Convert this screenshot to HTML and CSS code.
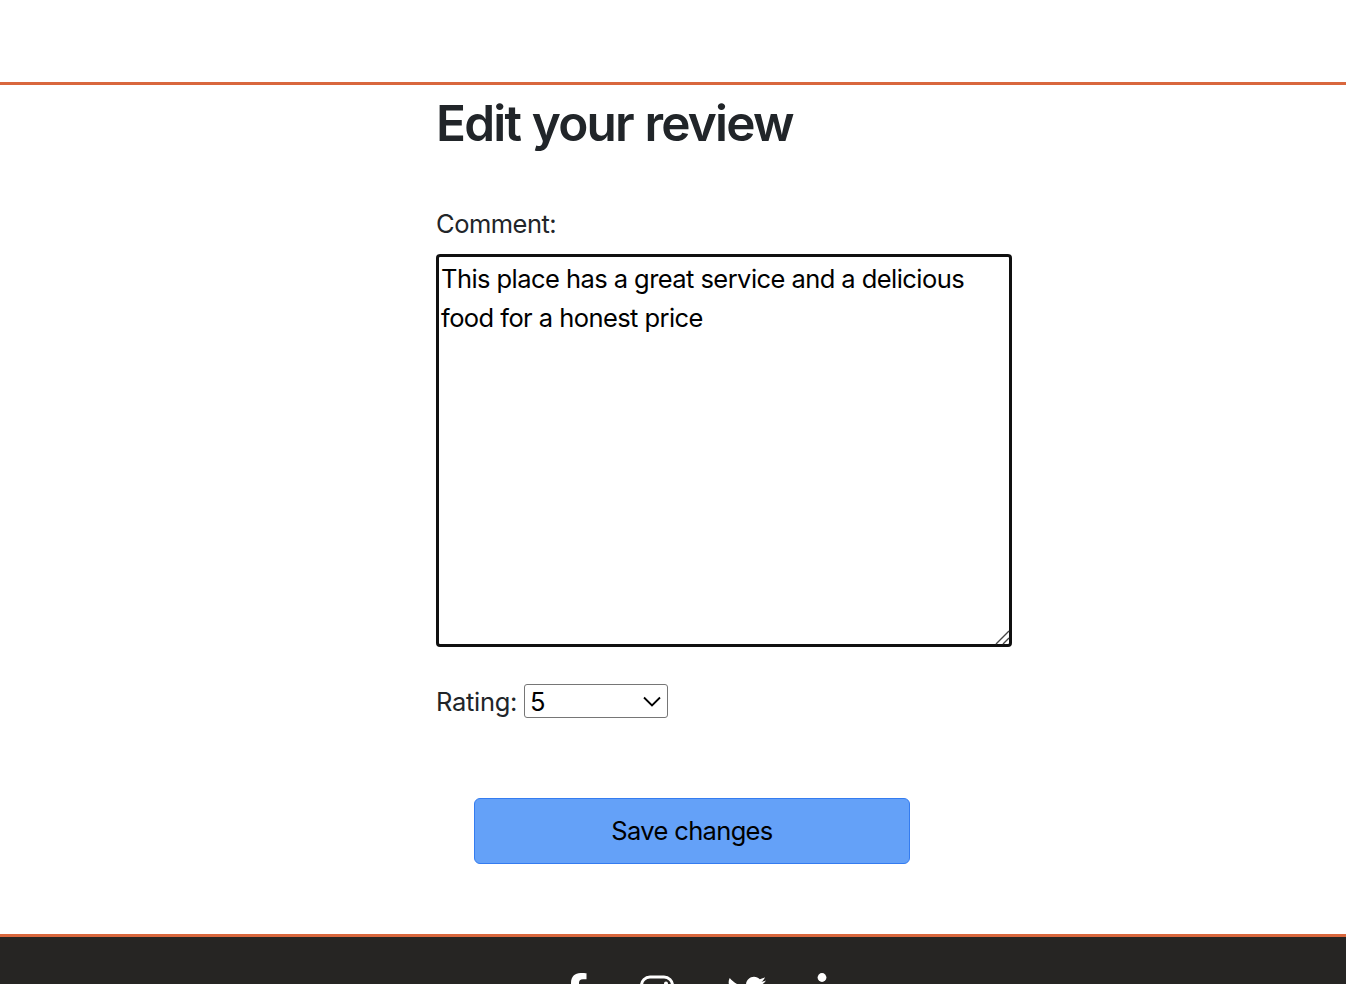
FILE: index.html
```
<!DOCTYPE html>
<html lang="en">
<head>
<meta charset="utf-8">
<title>Edit your review</title>
<link rel="stylesheet" href="styles.css">
</head>
<body>
<header class="topbar"></header>
<main class="main">
  <h1 class="title">Edit your review</h1>
  <form class="form">
    <label class="label" for="comment">Comment:</label>
    <div class="comment-wrap">
      <textarea class="comment" id="comment">This place has a great service and a delicious food for a honest price</textarea>
      <svg class="grip" viewBox="0 0 15 15"><path d="M1 14 14 1M8 14l6-6"/></svg>
    </div>
    <div class="rating">
      <label class="label rating-label" for="rating">Rating:</label>
      <div class="select" id="rating"><span>5</span><svg class="chevron" viewBox="0 0 18 11"><path d="M1 1.500 9 9.500l8-8"/></svg></div>
    </div>
    <button class="save" type="button">Save changes</button>
  </form>
</main>
<footer class="footer">
  <svg class="icon facebook" viewBox="0 0 24 39"><path d="M4 39V10C4 3.500 8 0 13.500 0c2.500 0 5 .1 6 .3v6h-3.500C13 6.300 12 8 12 10v29z"/></svg>
  <svg class="icon instagram" viewBox="0 0 34 34"><rect x="1.500" y="2" width="31" height="31" rx="8.500"/><circle cx="17" cy="17.500" r="7"/><circle class="dot" cx="26" cy="8.500" r="2"/></svg>
  <svg class="icon twitter" viewBox="0 0 512 512"><path d="M459.370 151.716c.325 4.548.325 9.097.325 13.645 0 138.720-105.583 298.558-298.558 298.558-59.452 0-114.680-17.219-161.137-47.106 8.447.974 16.568 1.299 25.340 1.299 49.055 0 94.213-16.568 130.274-44.832-46.132-.975-84.792-31.188-98.112-72.772 6.498.974 12.995 1.624 19.818 1.624 9.421 0 18.843-1.300 27.614-3.573-48.081-9.747-84.143-51.980-84.143-102.985v-1.299c13.969 7.797 30.214 12.670 47.431 13.319-28.264-18.843-46.781-51.005-46.781-87.391 0-19.492 5.197-37.360 14.294-52.954 51.655 63.675 129.300 105.258 216.365 109.807-1.624-7.797-2.599-15.918-2.599-24.040 0-57.828 46.782-104.934 104.934-104.934 30.213 0 57.502 12.670 76.670 33.137 23.715-4.548 46.456-13.320 66.599-25.340-7.798 24.366-24.366 44.833-46.132 57.827 21.117-2.273 41.584-8.122 60.426-16.243-14.292 20.791-32.161 39.308-52.628 54.253z"/></svg>
  <svg class="icon info" viewBox="0 0 15 39"><circle cx="8" cy="4.500" r="4.400"/><path d="M1 14h10v20h3v5H1v-5h3V19H1z"/></svg>
</footer>
</body>
</html>
```
FILE: styles.css
```
* { box-sizing: border-box; }
body {
  margin: 0;
  height: 984px;
  overflow: hidden;
  background: #fff;
  color: #212529;
  font: 25.5px/39px Inter, sans-serif;
}
.topbar { height: 85px; border-bottom: 3px solid #d9673d; }
.main { height: 849px; padding: 8px 0 0 436px; }
.title { margin: 0; font-size: 49.5px; line-height: 60px; font-weight: 600; letter-spacing: -1.8px; word-spacing: 1px; }
.form { padding-top: 51px; }
.label { display: block; letter-spacing: -0.5px; }
.comment-wrap { position: relative; width: 576px; height: 393px; margin-top: 11px; }
.comment {
  display: block; width: 100%; height: 100%; margin: 0; padding: 2px 1px 2px 2px;
  border: 3px solid #101010; border-radius: 4px; outline: 0; resize: none;
  background: #fff; color: #000; font: inherit; letter-spacing: -0.56px; overflow: hidden;
}
.grip { position: absolute; right: 2px; bottom: 2px; width: 15px; height: 15px; fill: none; stroke: #444; stroke-width: 1.4; }
.rating { display: flex; align-items: center; gap: 7px; height: 39px; margin-top: 34px; }
.rating-label { width: 81px; padding-top: 1px; letter-spacing: -0.3px; white-space: nowrap; }
.select {
  display: flex; align-items: center; justify-content: space-between;
  width: 144px; height: 34px; padding: 1px 6px 0 5px; border: 1px solid #767676; border-radius: 3px; color: #000;
}
.chevron { width: 18px; height: 11px; fill: none; stroke: #000; stroke-width: 1.8; }
.save {
  display: block; width: 436px; height: 66px; margin: 78px 0 0 38px; padding: 0 0 2px;
  border: 1px solid #347cf0; border-radius: 6px; background: #64a1f8; color: #000;
  font: inherit; letter-spacing: -0.66px;
}
.footer { display: flex; align-items: flex-start; height: 50px; padding: 36px 0 0 567px; border-top: 3px solid #d9673d; background: #262523; overflow: hidden; }
.icon { flex: none; height: 39px; fill: #fff; }
.facebook { width: 24px; }
.instagram { width: 34px; height: 34px; margin: 2px 0 0 49px; fill: none; stroke: #fff; stroke-width: 3; }
.instagram .dot { fill: #fff; stroke: none; }
.twitter { width: 39px; margin-left: 53px; }
.info { width: 15px; margin-left: 48px; }
```
